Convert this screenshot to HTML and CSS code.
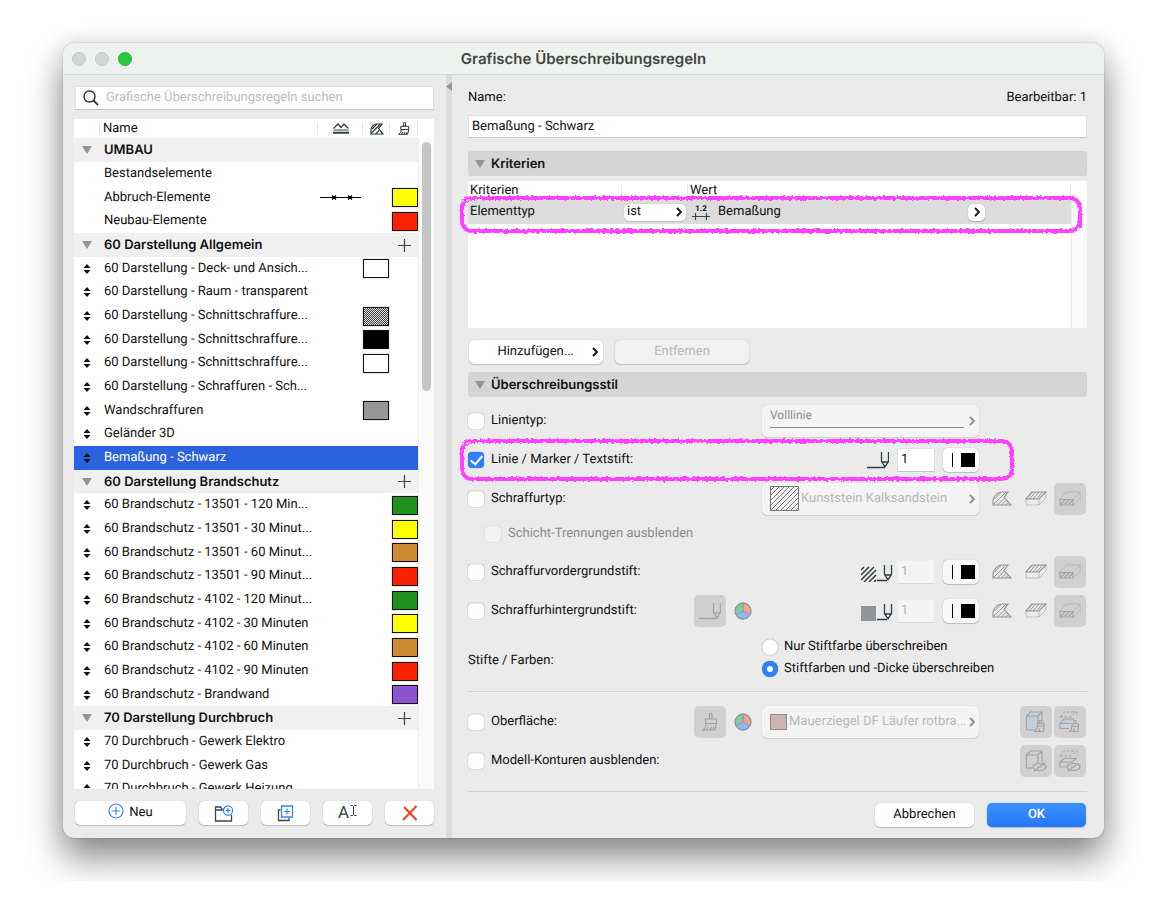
FILE: index.html
```
<!DOCTYPE html>
<html lang="de">
<head>
  <meta charset="UTF-8">
  <meta name="viewport" content="width=device-width, initial-scale=1.0">
  <title>Grafische Überschreibungsregeln</title>
  <link rel="stylesheet" href="styles.css">
</head>
<body>
  <!-- Shared icons -->
  <svg class="defs" width="0" height="0" aria-hidden="true">
    <filter id="rough" x="-5%" y="-20%" width="110%" height="140%">
      <feTurbulence type="fractalNoise" baseFrequency="0.35" numOctaves="2" seed="4"/>
      <feDisplacementMap in="SourceGraphic" scale="4"/>
    </filter>
    <pattern id="hatch" width="5" height="5" patternUnits="userSpaceOnUse">
      <path d="M-1 1l2-2M0 5l5-5M4 6l2-2" stroke="#777" stroke-width="1"/>
    </pattern>
    <symbol id="i-tri" viewBox="0 0 10 8"><path d="M0 0h10L5 8z" fill="#8f969a"/></symbol>
    <symbol id="i-sort" viewBox="0 0 8 10"><path d="M4 0l3.500 4h-7zM4 10l3.500-4h-7z" fill="currentColor"/></symbol>
    <symbol id="i-plus" viewBox="0 0 13 13"><path d="M6.500 0v13M0 6.500h13" stroke="#37444b" stroke-width="1.200"/></symbol>
    <symbol id="i-chev" viewBox="0 0 6 10"><path d="M1 1l4 4-4 4" fill="none" stroke="currentColor" stroke-width="1.800"/></symbol>
    <symbol id="i-lines" viewBox="0 0 16 11">
      <path d="M.5 5.500L5 1l3 3.500L11 1l4.500 4.500" fill="none" stroke="#2f3d44" stroke-width="1.200"/>
      <path d="M.5 7h15" stroke="#2f3d44" stroke-width="1"/><path d="M0 9.800h16" stroke="#2f3d44" stroke-width="2"/>
    </symbol>
    <symbol id="i-fillhead" viewBox="0 0 14 12">
      <path d="M1 11V6c1-3 3-5 6-5h5L8.500 5.500l4.500 5.500z" fill="none" stroke="#2f3d44" stroke-width="1.200"/>
      <path d="M1 10.500L10.500 1M5.500 11l3.500-3.500M2 6l5-5" stroke="#2f3d44" stroke-width="1.100"/>
    </symbol>
    <symbol id="i-fill" viewBox="0 0 20 15">
      <path d="M1 14V8.500C3 4 6 1 10 1h6l-4 5.500 7 7.500z" fill="none" stroke="currentColor" stroke-width="1.100"/>
      <path d="M1.500 13.500L13.500 1.500M5.500 14l6.500-6.500M9.500 14l4.500-4.500M13.500 14l2.500-2.500M2.500 8l6-6" stroke="currentColor" stroke-width="1"/>
    </symbol>
    <symbol id="i-slab" viewBox="0 0 22 15">
      <path d="M1 8v6h13l7-7V1" fill="none" stroke="currentColor" opacity=".5"/>
      <path d="M14 8v6" stroke="currentColor" opacity=".5"/>
      <path d="M1 8l6-7h14l-7 7z" fill="none" stroke="currentColor" stroke-width="1.200"/>
      <path d="M4.500 8l6-7M8 8l6-7M11.500 8l6-7" stroke="currentColor" stroke-width="1"/>
    </symbol>
    <symbol id="i-cut" viewBox="0 0 22 15">
      <path d="M1 8l6-7h14l-7 7M21 1v6l-7 7" fill="none" stroke="currentColor" opacity=".5"/>
      <path d="M1 8.500h13V14H1z" fill="none" stroke="currentColor" stroke-width="1.200"/>
      <path d="M1.500 13.500l5-5M5.500 13.500l5-5M9.500 13.500l4.500-4.500" stroke="currentColor" stroke-width="1.200"/>
    </symbol>
    <symbol id="i-pen" viewBox="0 0 22 18">
      <path d="M14.500 1v9.500l3.500 5 3.500-5V1M14.500 11h7M0 16.500h18" fill="none" stroke="currentColor" stroke-width="1.300"/>
      <path d="M16.500 14h3L18 16.500z" fill="currentColor"/>
    </symbol>
    <symbol id="i-penshort" viewBox="0 0 16 18">
      <path d="M7.500 1v9.500l3.500 5 3.500-5V1M7.500 11h7M0 16.500h10" fill="none" stroke="currentColor" stroke-width="1.300"/>
      <path d="M9.500 14h3L11 16.500z" fill="currentColor"/>
    </symbol>
    <symbol id="i-brush" viewBox="0 0 16 18">
      <path d="M7.500 6V1.500a1.200 1.200 0 012.500 0V6M3.500 10.500V6h11v4.500zM4 11c0 3-1 5-3.500 6H13l1.500-6.500M4.500 17l2-3M8 17l1.500-3M11 17l1-3" fill="none" stroke="currentColor" stroke-width="1.200"/>
    </symbol>
    <symbol id="i-wheel" viewBox="0 0 18 18">
      <path d="M9 9V1a8 8 0 017 12z" fill="#f6a092"/><path d="M9 9l7 4a8 8 0 01-14 0z" fill="#8cb8f8"/><path d="M9 9l-7 4A8 8 0 019 1z" fill="#82cba4"/>
      <path d="M9 9V1M9 9l7 4M9 9l-7 4" stroke="#8e9598" fill="none"/>
      <circle cx="9" cy="9" r="8" fill="none" stroke="#8e9598" stroke-width="1.300"/>
    </symbol>
    <symbol id="i-boxbrush" viewBox="0 0 22 22">
      <path d="M1.500 5h11v14h-11z" fill="#c0cede"/>
      <path d="M10 19H1.500V5l4-4H17v9M1.500 5h11.500L17 1M13 5v8" fill="none" stroke="currentColor" stroke-width="1.200"/>
      <path d="M14.500 12.500V9.500h2v3M12.500 15v-2.500h6.500V15zM12.500 15c0 3-1 4-2.500 5.500h8.500L19 15M14 20l1-2.500" fill="#d0d0d1" stroke="currentColor" stroke-width="1.200"/>
    </symbol>
    <symbol id="i-slabbrush" viewBox="0 0 22 22">
      <path d="M1 6l4-5h13v4" fill="none" stroke="currentColor" stroke-dasharray="3 1.500"/><path d="M1 6h11l4-4" fill="none" stroke="currentColor" stroke-dasharray="3 1.500"/>
      <path d="M1 12.500l4-4.500h10l-3 4.500z" fill="#c0cede"/>
      <path d="M10 17.500H1v-5L5 8h10M1 12.500h11" fill="none" stroke="currentColor" stroke-width="1.200"/>
      <path d="M15 13V9.500h2V13M13 15.500V13h6.500v2.500zM13 15.500c0 3-1 4-2.500 5h8.500l.5-5M14.500 20l1-2.500" fill="#d0d0d1" stroke="currentColor" stroke-width="1.200"/>
    </symbol>
    <symbol id="i-boxhide" viewBox="0 0 22 22">
      <path d="M7 18H1.500V5l4-4H17v11M1.500 5H13l4-4M13 5v8" fill="none" stroke="currentColor" stroke-width="1.200"/>
      <ellipse cx="14.500" cy="17" rx="6.500" ry="3.500" fill="none" stroke="currentColor" stroke-width="1.200"/><path d="M9 21L20 13M12 17h4" stroke="currentColor" stroke-width="1.200"/>
    </symbol>
    <symbol id="i-slabhide" viewBox="0 0 22 22">
      <path d="M1 6l4-5h13v4M1 6h11l4-4" fill="none" stroke="currentColor" stroke-dasharray="3 1.500"/>
      <path d="M7 17H1v-5l4-3.500h12L13 12H1" fill="none" stroke="currentColor" stroke-width="1.200"/>
      <ellipse cx="14.500" cy="17" rx="6.500" ry="3.500" fill="none" stroke="currentColor" stroke-width="1.200"/><path d="M9 21L20 13M12 17h4" stroke="currentColor" stroke-width="1.200"/>
    </symbol>
  </svg>

  <div class="window">
    <header class="titlebar">
      <div class="lights"><i></i><i></i><i class="green"></i></div>
      <h1>Grafische Überschreibungsregeln</h1>
    </header>

    <div class="content">
      <aside class="sidebar">
        <label class="search">
          <svg width="16" height="16" viewBox="0 0 16 16"><circle cx="6.500" cy="6.500" r="5.500" fill="none" stroke="#333" stroke-width="1.400"/><path d="M10.500 10.500l4.500 4.500" stroke="#333" stroke-width="1.800"/></svg>
          <input type="text" placeholder="Grafische Überschreibungsregeln suchen" aria-label="Suchen">
        </label>

        <div class="list">
          <table class="rules">
            <thead>
              <tr>
                <th class="c-mark"></th>
                <th class="c-name">Name</th>
                <th class="c-line"><svg width="16" height="11"><use href="#i-lines"/></svg></th>
                <th class="c-fill"><svg width="14" height="12"><use href="#i-fillhead"/></svg></th>
                <th class="c-surf"><svg width="12" height="13"><use href="#i-brush"/></svg></th>
              </tr>
            </thead>
            <tbody>
              <tr class="group"><td><svg width="10" height="8"><use href="#i-tri"/></svg></td><td>UMBAU</td><td></td><td></td><td></td></tr>
              <tr><td></td><td>Bestandselemente</td><td></td><td></td><td></td></tr>
              <tr><td></td><td>Abbruch-Elemente</td><td><svg width="41" height="5" viewBox="0 0 41 5"><path d="M0 2.500h41" stroke="#000" stroke-width="1.200"/><path d="M12 .5l4 4m0-4l-4 4M28 .5l4 4m0-4l-4 4" stroke="#000" stroke-width="1.400"/></svg></td><td></td><td><span class="swatch yellow"></span></td></tr>
              <tr><td></td><td>Neubau-Elemente</td><td></td><td></td><td><span class="swatch red"></span></td></tr>
              <tr class="group"><td><svg width="10" height="8"><use href="#i-tri"/></svg></td><td>60 Darstellung Allgemein</td><td></td><td></td><td><svg width="13" height="13"><use href="#i-plus"/></svg></td></tr>
              <tr><td><svg width="8" height="10"><use href="#i-sort"/></svg></td><td>60 Darstellung - Deck- und Ansich...</td><td></td><td><span class="swatch"></span></td><td></td></tr>
              <tr><td><svg width="8" height="10"><use href="#i-sort"/></svg></td><td>60 Darstellung - Raum - transparent</td><td></td><td></td><td></td></tr>
              <tr><td><svg width="8" height="10"><use href="#i-sort"/></svg></td><td>60 Darstellung - Schnittschraffure...</td><td></td><td><span class="swatch dots"></span></td><td></td></tr>
              <tr><td><svg width="8" height="10"><use href="#i-sort"/></svg></td><td>60 Darstellung - Schnittschraffure...</td><td></td><td><span class="swatch black"></span></td><td></td></tr>
              <tr><td><svg width="8" height="10"><use href="#i-sort"/></svg></td><td>60 Darstellung - Schnittschraffure...</td><td></td><td><span class="swatch"></span></td><td></td></tr>
              <tr><td><svg width="8" height="10"><use href="#i-sort"/></svg></td><td>60 Darstellung - Schraffuren - Sch...</td><td></td><td></td><td></td></tr>
              <tr><td><svg width="8" height="10"><use href="#i-sort"/></svg></td><td>Wandschraffuren</td><td></td><td><span class="swatch grey"></span></td><td></td></tr>
              <tr><td><svg width="8" height="10"><use href="#i-sort"/></svg></td><td>Geländer 3D</td><td></td><td></td><td></td></tr>
              <tr class="selected"><td><svg width="8" height="10"><use href="#i-sort"/></svg></td><td>Bemaßung - Schwarz</td><td></td><td></td><td></td></tr>
              <tr class="group"><td><svg width="10" height="8"><use href="#i-tri"/></svg></td><td>60 Darstellung Brandschutz</td><td></td><td></td><td><svg width="13" height="13"><use href="#i-plus"/></svg></td></tr>
              <tr><td><svg width="8" height="10"><use href="#i-sort"/></svg></td><td>60 Brandschutz - 13501 - 120 Min...</td><td></td><td></td><td><span class="swatch green"></span></td></tr>
              <tr><td><svg width="8" height="10"><use href="#i-sort"/></svg></td><td>60 Brandschutz - 13501 - 30 Minut...</td><td></td><td></td><td><span class="swatch yellow"></span></td></tr>
              <tr><td><svg width="8" height="10"><use href="#i-sort"/></svg></td><td>60 Brandschutz - 13501 - 60 Minut...</td><td></td><td></td><td><span class="swatch orange"></span></td></tr>
              <tr><td><svg width="8" height="10"><use href="#i-sort"/></svg></td><td>60 Brandschutz - 13501 - 90 Minut...</td><td></td><td></td><td><span class="swatch red"></span></td></tr>
              <tr><td><svg width="8" height="10"><use href="#i-sort"/></svg></td><td>60 Brandschutz - 4102 - 120 Minut...</td><td></td><td></td><td><span class="swatch green"></span></td></tr>
              <tr><td><svg width="8" height="10"><use href="#i-sort"/></svg></td><td>60 Brandschutz - 4102 - 30 Minuten</td><td></td><td></td><td><span class="swatch yellow"></span></td></tr>
              <tr><td><svg width="8" height="10"><use href="#i-sort"/></svg></td><td>60 Brandschutz - 4102 - 60 Minuten</td><td></td><td></td><td><span class="swatch orange"></span></td></tr>
              <tr><td><svg width="8" height="10"><use href="#i-sort"/></svg></td><td>60 Brandschutz - 4102 - 90 Minuten</td><td></td><td></td><td><span class="swatch red"></span></td></tr>
              <tr><td><svg width="8" height="10"><use href="#i-sort"/></svg></td><td>60 Brandschutz - Brandwand</td><td></td><td></td><td><span class="swatch purple"></span></td></tr>
              <tr class="group"><td><svg width="10" height="8"><use href="#i-tri"/></svg></td><td>70 Darstellung Durchbruch</td><td></td><td></td><td><svg width="13" height="13"><use href="#i-plus"/></svg></td></tr>
              <tr><td><svg width="8" height="10"><use href="#i-sort"/></svg></td><td>70 Durchbruch - Gewerk Elektro</td><td></td><td></td><td></td></tr>
              <tr><td><svg width="8" height="10"><use href="#i-sort"/></svg></td><td>70 Durchbruch - Gewerk Gas</td><td></td><td></td><td></td></tr>
              <tr><td><svg width="8" height="10"><use href="#i-sort"/></svg></td><td>70 Durchbruch - Gewerk Heizung</td><td></td><td></td><td></td></tr>
            </tbody>
          </table>
          <div class="scrollbar"><div class="thumb"></div></div>
        </div>

        <div class="tools">
          <button class="btn new"><svg width="16" height="16" viewBox="0 0 16 16"><circle cx="8" cy="8" r="7" fill="none" stroke="#3b82f6" stroke-width="1.200"/><path d="M8 4v8M4 8h8" stroke="#3b82f6" stroke-width="1.200"/></svg>Neu</button>
          <button class="btn" aria-label="Neue Gruppe"><svg width="20" height="17" viewBox="0 0 20 17"><path d="M9 5H1.500V16h16v-6M1.500 5V2h5L8 4" fill="none" stroke="#37444b" stroke-width="1.300"/><circle cx="14" cy="5.500" r="4.600" fill="#fff" stroke="#3b82f6" stroke-width="1.200"/><path d="M14 3v5M11.500 5.500h5" stroke="#3b82f6" stroke-width="1.200"/></svg></button>
          <button class="btn" aria-label="Duplizieren"><svg width="17" height="17" viewBox="0 0 17 17"><path d="M3.500 5H1.500V15.500h10.500V13" fill="none" stroke="#37444b" stroke-width="1.300"/><path d="M4.500 1h11v11h-11z" fill="#fff" stroke="#3b82f6" stroke-width="1.300"/><path d="M10 3.500v6M7 6.500h6" stroke="#3b82f6" stroke-width="1.200"/></svg></button>
          <button class="btn rename" aria-label="Umbenennen">A<svg width="7" height="11" viewBox="0 0 7 11"><path d="M.5.500h2l1 1 1-1h2M.5 10.500h2l1-1 1 1h2M3.500 1.500v8" fill="none" stroke="#37444b"/></svg></button>
          <button class="btn" aria-label="Löschen"><svg width="16" height="16" viewBox="0 0 16 16"><path d="M1 15L14.500 1M2 2l12.500 13" fill="none" stroke="#fb3b12" stroke-width="2"/></svg></button>
        </div>
      </aside>

      <div class="splitter"><svg width="6" height="9" viewBox="0 0 6 9"><path d="M6 0v9L0 4.500z" fill="#8f969a"/></svg></div>

      <main class="detail">
        <div class="namerow"><label for="rule-name">Name:</label><span>Bearbeitbar: 1</span></div>
        <input class="text name" id="rule-name" type="text" value="Bemaßung - Schwarz">

        <h2><svg width="10" height="8"><use href="#i-tri"/></svg>Kriterien</h2>
        <div class="criteria">
          <table>
            <thead><tr><th class="k-crit">Kriterien</th><th class="k-op"></th><th>Wert</th></tr></thead>
            <tbody>
              <tr>
                <td>Elementtyp</td>
                <td><span class="pick op"><select aria-label="Operator"><option>ist</option></select><svg width="6" height="10"><use href="#i-chev"/></svg></span></td>
                <td><div class="value">
                  <svg width="18" height="18" viewBox="0 0 18 18"><path d="M0 13.500h18M3.500 10v7M14.500 10v7" stroke="#37444b" stroke-width="1.200"/><text x="9" y="8" text-anchor="middle" class="dim">1.2</text></svg>
                  <span>Bemaßung</span>
                  <button class="btn more" aria-label="Wert wählen"><svg width="6" height="10"><use href="#i-chev"/></svg></button>
                </div></td>
              </tr>
            </tbody>
          </table>
          <div class="track"></div>
          <div class="mark mark-criteria"></div>
        </div>
        <div class="actions">
          <button class="btn add"><span>Hinzufügen...</span><svg width="6" height="10"><use href="#i-chev"/></svg></button>
          <button class="btn remove" disabled>Entfernen</button>
        </div>

        <h2><svg width="10" height="8"><use href="#i-tri"/></svg>Überschreibungsstil</h2>

        <div class="rows upper">
          <div class="row">
            <label><input type="checkbox">Linientyp:</label>
            <div class="field"><div class="pick off linetype"><select disabled aria-label="Linientyp"><option>Volllinie</option></select><svg width="6" height="10"><use href="#i-chev"/></svg></div></div>
          </div>
          <div class="row">
            <label><input type="checkbox" checked>Linie / Marker / Textstift:</label>
            <div class="field">
              <svg class="ink" width="22" height="18"><use href="#i-pen"/></svg>
              <input class="text num" type="text" value="1" aria-label="Textstift">
              <button class="btn pen" aria-label="Stift wählen"><i></i><b></b></button>
            </div>
            <div class="mark mark-pen"></div>
          </div>
          <div class="row">
            <label><input type="checkbox">Schraffurtyp:</label>
            <div class="field"><div class="pick off"><svg width="29" height="25" viewBox="0 0 29 25"><path d="M.5.500h28v24H.5z" fill="url(#hatch)" stroke="#777"/></svg><select disabled aria-label="Schraffurtyp"><option>Kunststein Kalksandstein</option></select><svg width="6" height="10"><use href="#i-chev"/></svg></div></div>
            <div class="modes">
              <button class="tile clear" aria-label="Zeichnungsschraffur"><svg width="20" height="15"><use href="#i-fill"/></svg></button>
              <button class="tile clear" aria-label="Deckschraffur"><svg width="22" height="15"><use href="#i-slab"/></svg></button>
              <button class="tile" aria-label="Schnittschraffur"><svg width="22" height="15"><use href="#i-cut"/></svg></button>
            </div>
          </div>
          <div class="row sub">
            <label><input type="checkbox" disabled>Schicht-Trennungen ausblenden</label>
          </div>
          <div class="row">
            <label><input type="checkbox">Schraffurvordergrundstift:</label>
            <div class="field">
              <svg class="ink wide" width="32" height="20" viewBox="0 0 32 20"><path d="M0 8l3-3M0 13l8-8M0 18l13-13M3 20L15 8M8 20l7-7M13 20l2-2" stroke="currentColor" stroke-width="1.500"/><use href="#i-penshort" x="16" y="2" width="16" height="18"/></svg>
              <input class="text num" type="text" value="1" disabled aria-label="Vordergrundstift">
              <button class="btn pen faint" aria-label="Stift wählen"><i></i><b></b></button>
            </div>
            <div class="modes">
              <button class="tile clear" aria-label="Zeichnungsschraffur"><svg width="20" height="15"><use href="#i-fill"/></svg></button>
              <button class="tile clear" aria-label="Deckschraffur"><svg width="22" height="15"><use href="#i-slab"/></svg></button>
              <button class="tile" aria-label="Schnittschraffur"><svg width="22" height="15"><use href="#i-cut"/></svg></button>
            </div>
          </div>
          <div class="row">
            <label><input type="checkbox">Schraffurhintergrundstift:</label>
            <div class="extra"><button class="tile" aria-label="Stiftfarbe"><svg width="22" height="18"><use href="#i-pen"/></svg></button><svg width="18" height="18"><use href="#i-wheel"/></svg></div>
            <div class="field">
              <svg class="ink wide" width="32" height="20" viewBox="0 0 32 20"><path d="M0 5h15v15H0z" fill="#8f969a"/><use href="#i-penshort" x="16" y="2" width="16" height="18"/></svg>
              <input class="text num" type="text" value="1" disabled aria-label="Hintergrundstift">
              <button class="btn pen faint" aria-label="Stift wählen"><i></i><b></b></button>
            </div>
            <div class="modes">
              <button class="tile clear" aria-label="Zeichnungsschraffur"><svg width="20" height="15"><use href="#i-fill"/></svg></button>
              <button class="tile clear" aria-label="Deckschraffur"><svg width="22" height="15"><use href="#i-slab"/></svg></button>
              <button class="tile" aria-label="Schnittschraffur"><svg width="22" height="15"><use href="#i-cut"/></svg></button>
            </div>
          </div>
          <div class="row colors">
            <span class="caption">Stifte / Farben:</span>
            <div class="radios">
              <label><input type="radio" name="pen">Nur Stiftfarbe überschreiben</label>
              <label><input type="radio" name="pen" checked>Stiftfarben und -Dicke überschreiben</label>
            </div>
          </div>
        </div>

        <div class="rows lower">
          <div class="row">
            <label><input type="checkbox">Oberfläche:</label>
            <div class="extra"><button class="tile" aria-label="Oberfläche"><svg width="16" height="18"><use href="#i-brush"/></svg></button><svg width="18" height="18"><use href="#i-wheel"/></svg></div>
            <div class="field"><div class="pick off"><span class="brick"></span><select disabled aria-label="Oberfläche"><option>Mauerziegel DF Läufer rotbra...</option></select><svg width="6" height="10"><use href="#i-chev"/></svg></div></div>
            <div class="modes">
              <button class="tile" aria-label="Alle Oberflächen"><svg width="22" height="22"><use href="#i-boxbrush"/></svg></button>
              <button class="tile" aria-label="Schnittflächen"><svg width="22" height="22"><use href="#i-slabbrush"/></svg></button>
            </div>
          </div>
          <div class="row">
            <label><input type="checkbox">Modell-Konturen ausblenden:</label>
            <div class="modes">
              <button class="tile" aria-label="Alle Konturen"><svg width="22" height="22"><use href="#i-boxhide"/></svg></button>
              <button class="tile" aria-label="Schnittkonturen"><svg width="22" height="22"><use href="#i-slabhide"/></svg></button>
            </div>
          </div>
        </div>

        <footer>
          <button class="btn">Abbrechen</button>
          <button class="btn ok">OK</button>
        </footer>
      </main>
    </div>
  </div>
</body>
</html>
```
FILE: styles.css
```
* {
  box-sizing: border-box;
}
body {
  margin: 0;
  padding: 43px 63px;
  background: #fff;
  color: #111;
  font: 13px/20px Roboto, sans-serif;
  text-rendering: geometricPrecision;
}
button, input, select {
  font: inherit;
  color: inherit;
  margin: 0;
  text-rendering: inherit;
}
svg {
  display: block;
  flex: none;
}
.defs {
  position: absolute;
}
.window {
  background: #ebebeb;
  border-radius: 11px;
  overflow: hidden;
  box-shadow: 0 0 1px rgba(0, 0, 0, 0.5), 0 20px 36px rgba(0, 0, 0, 0.46), 0 0 24px rgba(0, 0, 0, 0.1);
}
.titlebar {
  display: grid;
  grid-template-columns: 1fr auto 1fr;
  align-items: center;
  height: 32px;
  background: #edf2ee;
  border-bottom: 1px solid #d5d8d6;
}
.titlebar h1 {
  margin: 0;
  font-family: Inter, sans-serif;
  font-size: 15px;
  font-weight: 600;
  color: #444;
}
.lights {
  display: flex;
  gap: 9px;
  padding-left: 9px;
}
.lights i {
  width: 14px;
  height: 14px;
  border-radius: 50%;
  background: #d2d7d3;
  border: 1px solid #c2c7c3;
}
.lights .green {
  background: #28c840;
  border-color: #24b83a;
}
.content {
  display: flex;
}

/* Sidebar */
.sidebar {
  flex: none;
  width: 383px;
  padding: 11px 12px 12px 11px;
}
.search {
  display: flex;
  align-items: center;
  gap: 7px;
  height: 24px;
  margin-left: 1px;
  padding-left: 7px;
  background: #fff;
  border: 1px solid #e2e2e2;
  border-bottom-color: #c6c6c6;
}
.search input {
  flex: 1;
  border: 0;
  padding: 0;
  outline: 0;
  background: none;
}
.search input::placeholder {
  color: #bcbcbc;
}
.list {
  display: flex;
  height: 670px;
  margin-top: 9px;
  overflow: hidden;
  background: #fff;
}
.rules, .criteria table {
  border-collapse: collapse;
  table-layout: fixed;
}
.rules {
  width: 344px;
  align-self: flex-start;
}
.rules td, .rules th {
  padding: 0;
  line-height: 16px;
  white-space: nowrap;
}
.rules th {
  height: 19px;
  font-weight: 400;
  text-align: left;
  background: linear-gradient(#e2e2e2, #e2e2e2) right center / 1px 13px no-repeat;
}
.rules .c-mark {
  width: 26px;
}
.rules .c-name {
  width: 218px;
  padding-left: 3px;
}
.c-line {
  width: 45px;
}
.c-fill {
  width: 27px;
}
.c-surf {
  width: 28px;
}
.rules svg {
  margin: 0 auto;
}
.rules tbody tr {
  height: 24px;
}
.rules tbody tr:nth-child(3n) {
  height: 23px;
}
.rules td:nth-child(2) {
  padding-left: 4px;
}
.rules .group {
  background: #f0f0f0;
  font-family: Inter, sans-serif;
  font-weight: 600;
}
.rules .selected {
  background: #2b63de;
}
.rules .selected td:nth-child(2) {
  color: #fff;
}
.swatch {
  display: block;
  width: 26px;
  height: 19px;
  border: 1px solid #111;
  outline: 1px solid rgba(0, 0, 0, 0.08);
  background: #fff;
}
td:last-child .swatch {
  margin-left: auto;
}
.swatch.yellow {
  background: #fdff00;
}
.swatch.red {
  background: #fc2200;
}
.swatch.green {
  background: #1f921f;
}
.swatch.orange {
  background: #cb8a32;
}
.swatch.purple {
  background: #8c54d0;
}
.swatch.black {
  background: #000;
}
.swatch.grey {
  background: #969696;
}
.swatch.dots {
  background: repeating-conic-gradient(#444 0 25%, #ddd 0 50%) 0 0 / 2px 2px;
}
.scrollbar {
  flex: 1;
  margin-top: 19px;
  padding: 4px 3px;
  background: #fafafa;
  border-left: 1px solid #eee;
}
.thumb {
  width: 9px;
  height: 249px;
  border-radius: 5px;
  background: #c5c5c5;
}
.tools {
  display: flex;
  gap: 13px;
  margin-top: 12px;
  padding-left: 1px;
}
.btn {
  display: flex;
  align-items: center;
  justify-content: center;
  flex: none;
  width: 49px;
  height: 24px;
  padding: 0;
  border: 0;
  border-radius: 5px;
  background: #fff;
  box-shadow: 0 0 1px rgba(0, 0, 0, 0.3), 0 1px 1px rgba(0, 0, 0, 0.18);
}
.btn.new {
  flex: 1;
  gap: 5px;
}
.new svg {
  margin-bottom: 4px;
}
.rename {
  gap: 1px;
  font-size: 17px;
  color: #37444b;
}
.rename svg {
  align-self: flex-start;
  margin-top: 4px;
}
.splitter {
  flex: none;
  width: 6px;
  padding-top: 7px;
  background: #dcdcdc;
}

/* Detail pane */
.detail {
  flex: 1;
  min-width: 0;
  padding: 13px 17px 11px 16px;
}
.namerow {
  display: flex;
  justify-content: space-between;
  margin-bottom: 7px;
}
.text {
  border: 1px solid #e0e0e0;
  border-bottom-color: #c6c6c6;
  background: #fff;
  padding: 0 3px;
  outline: 0;
}
.name {
  display: block;
  width: 100%;
  height: 23px;
  margin-bottom: 13px;
}
h2 {
  display: flex;
  align-items: center;
  gap: 6px;
  height: 25px;
  margin: 0;
  padding-left: 7px;
  border-radius: 3px;
  background: #d5d5d5;
  font-family: Inter, sans-serif;
  font-size: 13px;
  font-weight: 600;
}
.criteria {
  position: relative;
  display: flex;
  height: 147px;
  margin-top: 5px;
  background: #fff;
}
.criteria table {
  flex: 1;
  align-self: flex-start;
}
.criteria th {
  height: 19px;
  padding: 0 2px;
  text-align: left;
  font-weight: 400;
  line-height: 19px;
  background: linear-gradient(#e2e2e2, #e2e2e2) right bottom / 1px 15px no-repeat;
}
.criteria td {
  height: 24px;
  padding: 0 2px;
  background: #dcdcdc;
}
.k-crit {
  width: 154px;
}
.k-op {
  width: 66px;
}
.track {
  width: 16px;
  margin-top: 19px;
  background: #fafafa;
  border-left: 1px solid #e8e8e8;
}
.value {
  display: flex;
  align-items: center;
  gap: 8px;
  padding-left: 2px;
}
.dim {
  font-size: 8px;
  font-weight: 600;
}
.more {
  width: 17px;
  height: 17px;
  margin-left: auto;
  margin-right: 84px;
}
.pick {
  display: flex;
  align-items: center;
  width: 100%;
  height: 32px;
  padding: 0 4px 0 8px;
  border-radius: 5px;
  background: #fff;
  box-shadow: 0 0 1px rgba(0, 0, 0, 0.25), 0 1px 1px rgba(0, 0, 0, 0.1);
}
.pick select {
  flex: 1;
  min-width: 0;
  padding: 0 0 0 2px;
  border: 0;
  appearance: none;
  background: none;
  opacity: 1;
}
.op {
  width: 62px;
  height: 17px;
  padding-left: 1px;
}
.off {
  background: #f4f4f4;
  color: #8c8c8c;
}
.off select {
  color: #b8b8b8;
}
.linetype select {
  align-self: flex-start;
  height: 23px;
  padding: 0 0 7px;
  margin-right: 5px;
  border-bottom: 1px solid #8c8c8c;
  border-radius: 0;
  color: #8c8c8c;
  font-size: 12px;
}
.actions {
  display: flex;
  gap: 12px;
  margin: 12px 1px 8px;
}
.actions .btn {
  width: 134px;
}
.actions .add {
  justify-content: flex-end;
  padding-right: 5px;
  gap: 18px;
}
.actions .remove {
  background: #f1f1f1;
  color: #b8b8b8;
}
.upper {
  margin-top: 4px;
}
.row {
  position: relative;
  display: grid;
  grid-template-columns: 1fr 68px 217px 108px;
  align-items: center;
  height: 39px;
}
.row label {
  display: flex;
  align-items: center;
  gap: 7px;
  white-space: nowrap;
}
.sub {
  height: 34px;
  padding: 0 0 2px 17px;
  color: #8a8a8a;
}
.extra {
  grid-column: 2;
  display: flex;
  align-items: center;
  gap: 8px;
}
.field {
  grid-column: 3;
  grid-row: 1;
  display: flex;
  align-items: center;
  justify-content: flex-end;
  gap: 8px;
}
.modes {
  grid-column: 4;
  grid-row: 1;
  display: flex;
  justify-content: flex-end;
  gap: 2px;
  padding-right: 1px;
}
.tile {
  display: flex;
  align-items: center;
  justify-content: center;
  flex: none;
  width: 32px;
  height: 32px;
  padding: 0;
  border: 0;
  border-radius: 5px;
  background: #d0d0d1;
  color: #a2a4a6;
}
.tile.clear {
  background: none;
  color: #8d9397;
}
.ink {
  color: #2f3d44;
}
.ink.wide {
  margin-right: -4px;
}
.num {
  width: 38px;
  height: 24px;
}
.num:disabled {
  background: #f4f4f4;
  border-color: #eee;
  border-bottom-color: #d8d8d8;
  color: #b4b4b4;
}
.pen {
  width: 36px;
  gap: 8px;
  padding-left: 4px;
}
.pen i {
  width: 1px;
  height: 14px;
  background: #000;
}
.pen b {
  width: 14px;
  height: 14px;
  background: #000;
}
.pen.faint {
  background: #f8f8f8;
}
.brick {
  flex: none;
  width: 17px;
  height: 16px;
  border: 1px solid #8c8c8c;
  background: #cdb5ae;
}
input[type="checkbox"], input[type="radio"] {
  display: grid;
  place-items: center;
  appearance: none;
  flex: none;
  width: 16px;
  height: 16px;
  border-radius: 4px;
  background: #fff;
  box-shadow: 0 0 1px rgba(0, 0, 0, 0.5), inset 0 1px 1px rgba(0, 0, 0, 0.08);
}
input[type="radio"] {
  border-radius: 50%;
}
input[type="checkbox"]:disabled {
  background: #f2f2f2;
  box-shadow: 0 0 1px rgba(0, 0, 0, 0.3);
}
input:checked {
  background: #2f80fc !important;
}
input[type="checkbox"]:checked::after {
  content: "";
  width: 5px;
  height: 10px;
  margin-bottom: 2px;
  border: solid #fff;
  border-width: 0 2px 2px 0;
  transform: rotate(40deg);
}
input[type="radio"]:checked::after {
  content: "";
  width: 6px;
  height: 6px;
  border-radius: 50%;
  background: #fff;
}
.colors {
  height: 61px;
}
.radios {
  grid-column: 3 / 5;
  display: grid;
  gap: 2px;
  padding-bottom: 6px;
}
.radios label {
  gap: 6px;
}
.lower {
  padding: 10px 0 11px;
  border: solid #d2d2d2;
  border-width: 1px 0;
}
footer {
  display: flex;
  justify-content: flex-end;
  gap: 13px;
  margin-top: 11px;
  padding-right: 1px;
}
footer .btn {
  width: 99px;
}
footer .ok {
  background: linear-gradient(#3b91ff, #2677fb);
  color: #fff;
  font-weight: 500;
}

/* Hand-drawn highlights */
.mark {
  position: absolute;
  border: 4px solid #ff40ff;
  border-radius: 12px;
  filter: url(#rough);
  pointer-events: none;
}
.mark-criteria {
  inset: 15px 5px auto -8px;
  height: 37px;
}
.mark-pen {
  inset: -1px 73px -2px -8px;
}
```
